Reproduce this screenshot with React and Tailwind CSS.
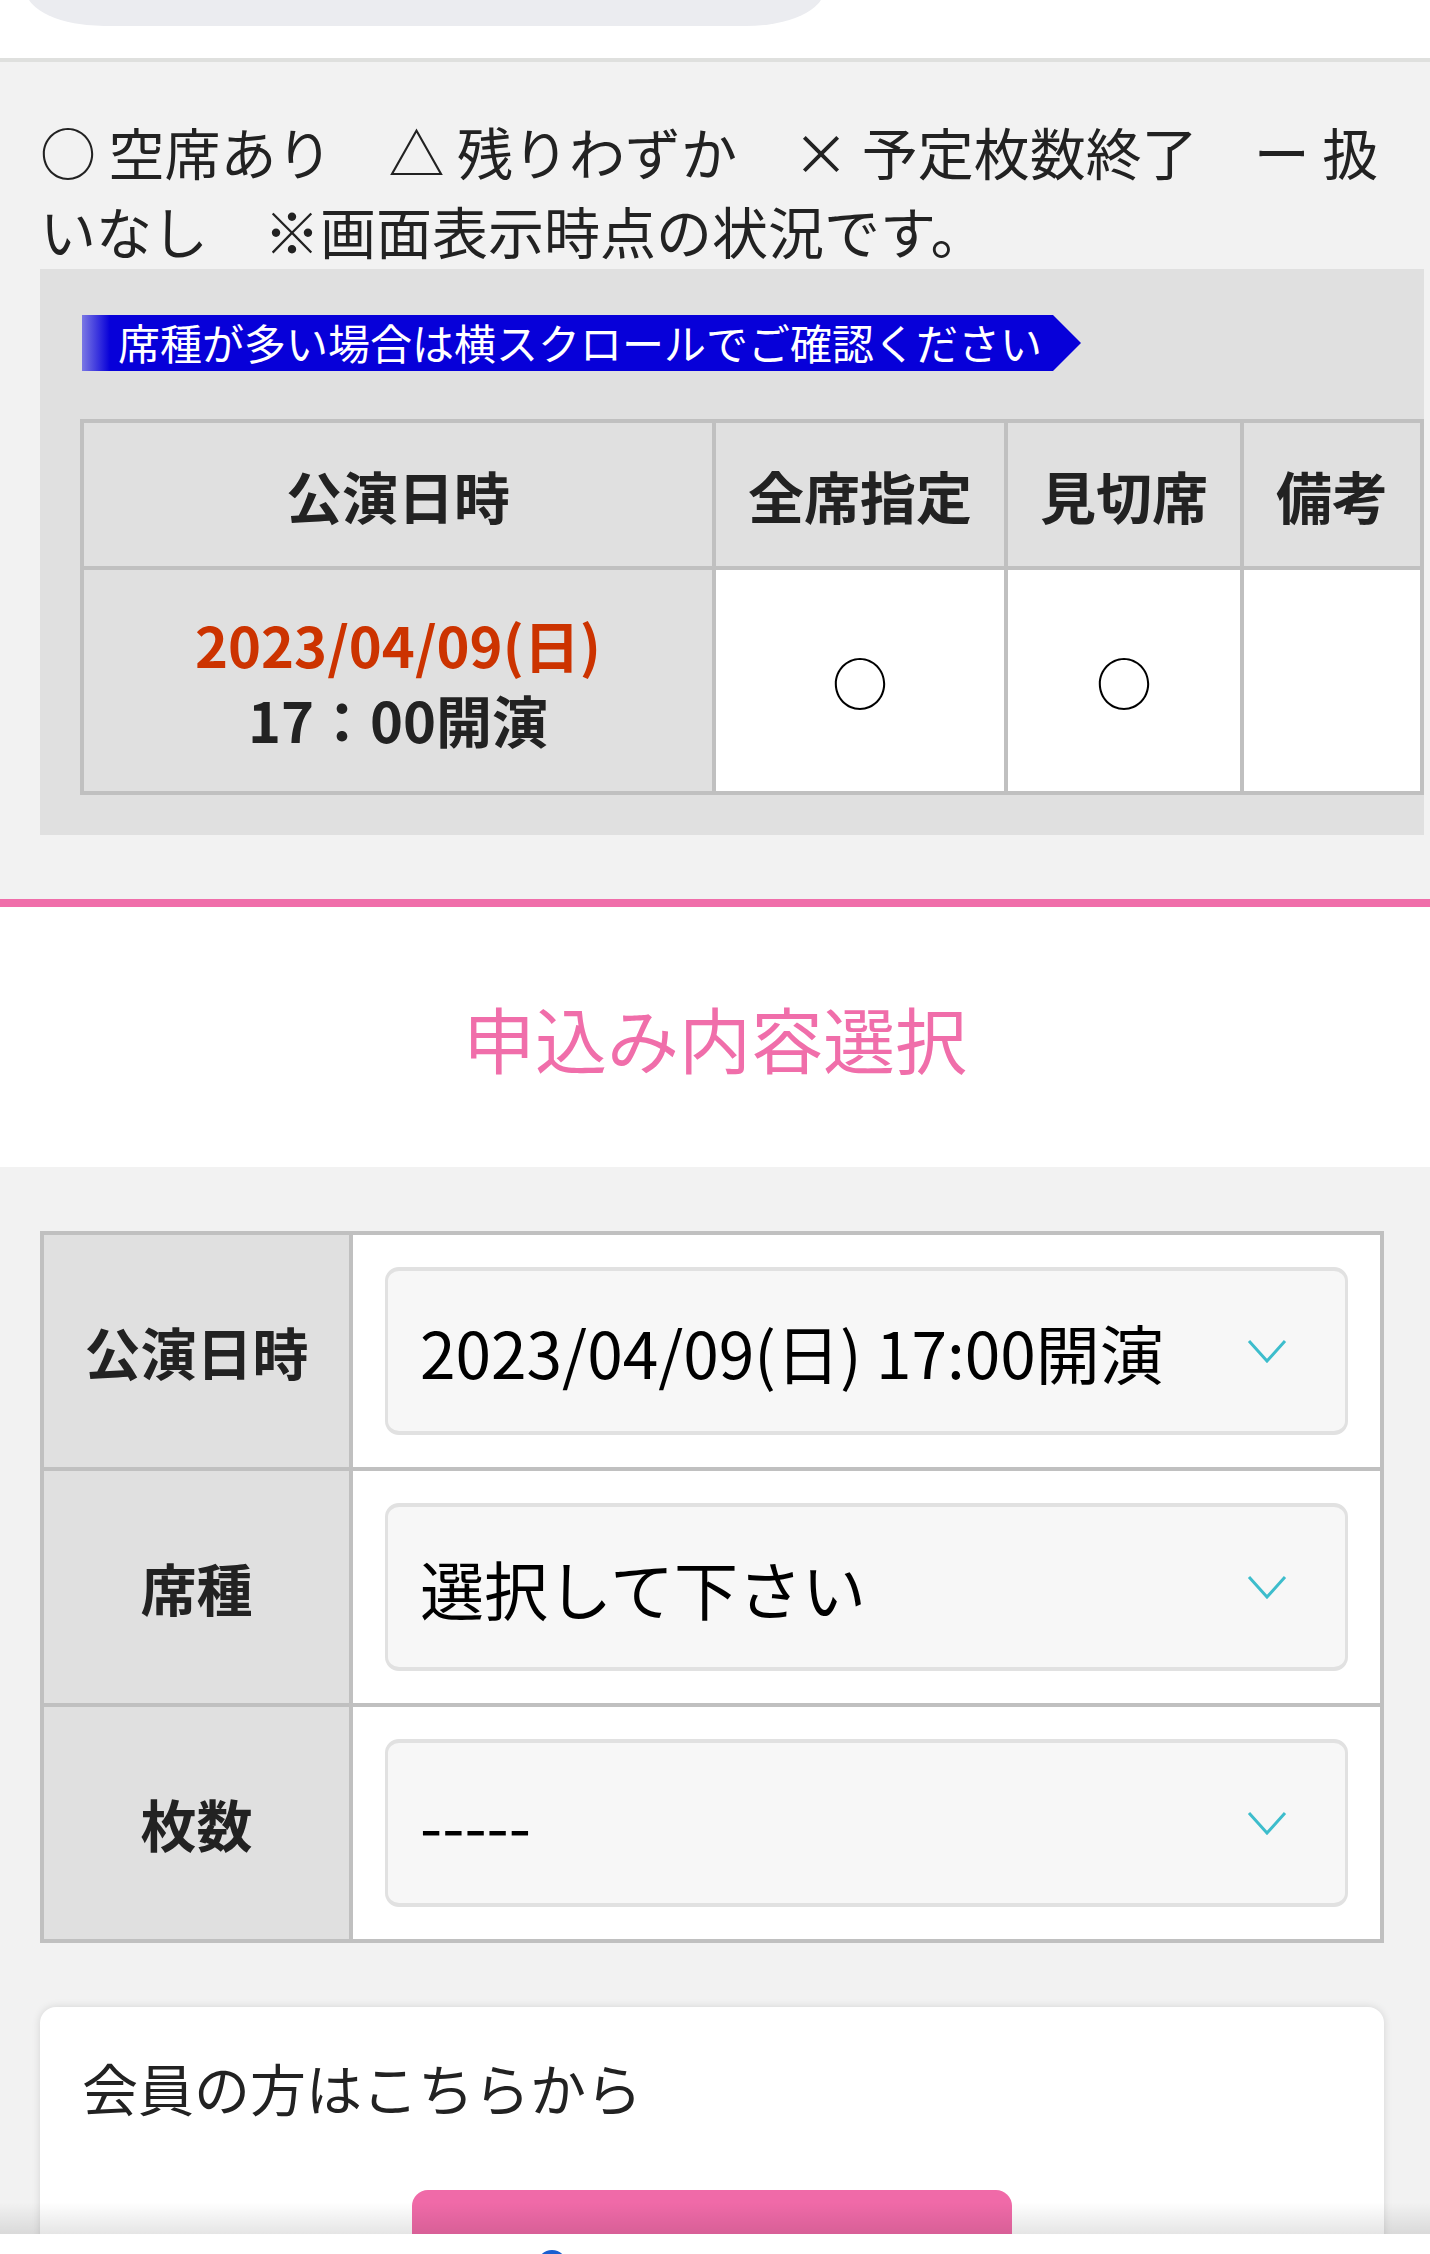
import { ChevronDown } from 'lucide-react'

const seatCols = [
  { label: '全席指定', mark: '○' },
  { label: '見切席', mark: '○' },
  { label: '備考', mark: '' },
]

const formRows = [
  { label: '公演日時', value: '2023/04/09(日) 17:00開演' },
  { label: '席種', value: '選択して下さい' },
  { label: '枚数', value: '-----' },
]

function Chevron() {
  return (
    <svg width="40" height="24" viewBox="0 0 40 24" fill="none">
      <polyline points="2,2 20,22 38,2" stroke="#3dbdcc" strokeWidth="3" />
    </svg>
  )
}

export default function App() {
  return (
    <div className="relative w-[1430px] h-[2254px] overflow-hidden bg-[#f2f2f2] font-['Noto_Sans_CJK_JP','Noto_Sans',sans-serif] text-[#222]">
      {/* top strip with the bottom of a pill button */}
      <div className="h-[62px] bg-white border-b-4 border-[#dfe0de] overflow-hidden">
        <div className="-mt-[54px] ml-[26px] w-[798px] h-[80px] rounded-[78px/36px] bg-[#ebecf0]"></div>
      </div>

      {/* legend */}
      <div className="pl-[40px] pr-[46px] pt-[49px] text-[56px] leading-[79px]">
        ○ 空席あり　△ 残りわずか　× 予定枚数終了　ー 扱いなし　※画面表示時点の状況です。
      </div>

      {/* availability panel */}
      <div className="ml-[40px] w-[1384px] bg-[#e0e0e0] pt-[46px] pb-[40px] pl-[40px] overflow-hidden">
        <div className="ml-[2px] flex h-[56px]">
          <div className="w-[971px] h-full bg-[linear-gradient(90deg,#7b78e4_0px,#0700d9_28px)] pl-[36px] text-white text-[42px] leading-[54px] whitespace-nowrap">
            席種が多い場合は横スクロールでご確認ください
          </div>
          <svg width="28" height="56" viewBox="0 0 28 56">
            <polygon points="0,0 28,28 0,56" fill="#0700d9" />
          </svg>
        </div>

        <div className="mt-[48px] w-[1344px] grid grid-cols-[628px_288px_232px_176px] gap-[4px] p-[4px] bg-[#c0c0c0]">
          <div className="h-[143px] bg-[#e0e0e0] flex items-center justify-center text-[56px] font-bold">公演日時</div>
          {seatCols.map((c) => (
            <div key={c.label} className="h-[143px] bg-[#e0e0e0] flex items-center justify-center text-[56px] font-bold">
              {c.label}
            </div>
          ))}
          <div className="h-[221px] bg-[#e0e0e0] flex flex-col items-center justify-center text-[56px] font-bold leading-[75px]">
            <span className="text-[#cc3300]">2023/04/09(日)</span>
            <span>17：00開演</span>
          </div>
          {seatCols.map((c) => (
            <div key={c.label} className="h-[221px] bg-white flex items-center justify-center text-[56px] text-black">
              {c.mark}
            </div>
          ))}
        </div>
      </div>

      {/* section title */}
      <div className="mt-[64px] h-[268px] border-t-8 border-[#f06eaa] bg-white flex items-center justify-center">
        <h2 className="text-[72px] leading-none font-normal text-[#f06eaa]">申込み内容選択</h2>
      </div>

      {/* selection form */}
      <div className="mt-[64px] ml-[40px] w-[1344px] grid grid-cols-[305px_1fr] gap-[4px] p-[4px] bg-[#c0c0c0]">
        {formRows.map((r) => (
          <>
            <div key={r.label + 'l'} className="h-[232px] bg-[#e0e0e0] flex items-center justify-center text-[56px] font-bold">
              {r.label}
            </div>
            <div key={r.label + 'v'} className="h-[232px] bg-white px-[32px] flex items-center">
              <div className="flex-1 h-[168px] rounded-[14px] border-x-[3px] border-y-4 border-[#e1e1e1] bg-[#f7f7f7] pl-[32px] pr-[58px] flex items-center justify-between">
                <span className="text-[64px] text-black whitespace-nowrap">{r.value}</span>
                <Chevron />
              </div>
            </div>
          </>
        ))}
      </div>

      {/* member card */}
      <div className="mt-[64px] ml-[40px] w-[1344px] rounded-[16px] bg-white shadow-[0_0_8px_rgba(0,0,0,0.12)] pt-[40px] pl-[42px] pb-[40px]">
        <p className="text-[56px] leading-[80px]">会員の方はこちらから</p>
        <div className="mt-[63px] ml-[330px] w-[600px] h-[120px] rounded-[16px] bg-[#f06aa8]"></div>
      </div>

      {/* bottom browser bar overlay */}
      <div className="absolute left-0 bottom-0 w-full">
        <div className="h-[32px] bg-[linear-gradient(180deg,rgba(0,0,0,0)_0%,rgba(0,0,0,0.1)_100%)]"></div>
        <div className="relative h-[20px] bg-white overflow-hidden">
          <div className="absolute left-[537px] top-[16px] w-[30px] h-[30px] rounded-full bg-[#1a5fd0]"></div>
        </div>
      </div>
    </div>
  )
}
